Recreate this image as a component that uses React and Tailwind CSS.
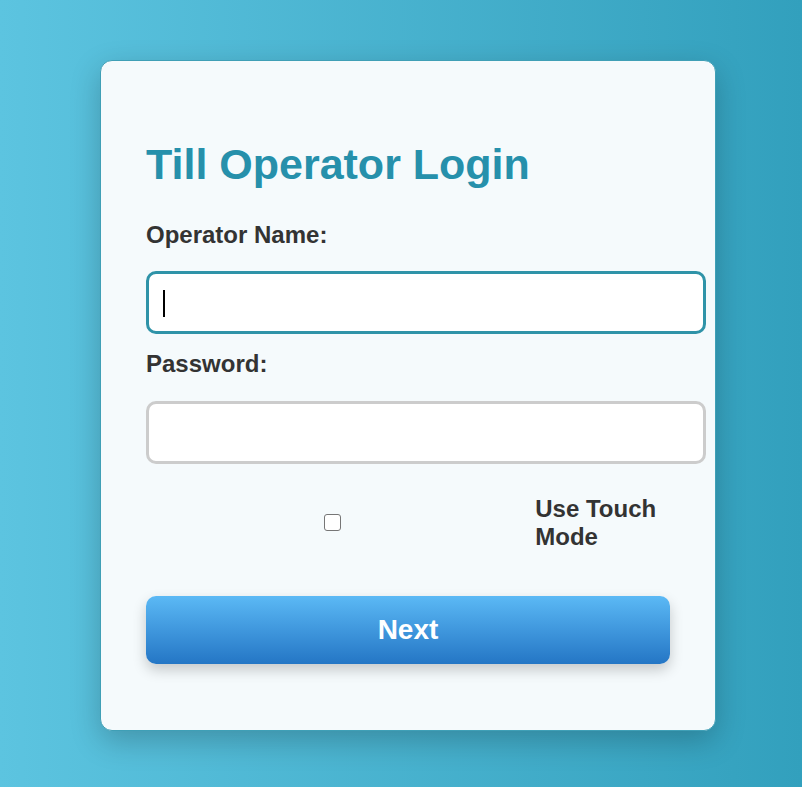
import React, { useState } from 'react';

export default function App() {
  const [name, setName] = useState('');
  const [password, setPassword] = useState('');
  const [touch, setTouch] = useState(false);

  return (
    <div
      className="w-full min-h-[787px] bg-linear-to-r from-[#5cc4e0] to-[#32a0bd] pt-[60px] pl-[100px]"
      style={{ fontFamily: '"Liberation Sans", Arial, sans-serif' }}
    >
      <div className="w-[616px] bg-[#f5fafc] border border-[#3f9fb6] rounded-[12px] px-[45px] pt-[45px] pb-[66px] shadow-[0_10px_30px_rgba(0,0,0,0.22)]">
        {/* Title */}
        <h1 className="mt-[34px] text-[43px] leading-[49px] font-bold text-[#2690ab]">
          Till Operator Login
        </h1>

        {/* Operator name */}
        <label className="block mt-[32px] text-[24px] leading-[28px] font-bold text-[#333]">
          Operator Name:
        </label>
        <div className="relative mt-[22px]">
          <input
            value={name}
            onChange={(e) => setName(e.target.value)}
            className="block w-[560px] h-[63px] px-[15px] text-[20px] bg-white border-[3px] border-[#2f93a8] rounded-[10px] outline-none caret-transparent"
          />
          {/* caret of the focused field */}
          {name === '' && (
            <span className="absolute left-[17px] top-[19px] w-[2px] h-[27px] bg-black pointer-events-none" />
          )}
        </div>

        {/* Password */}
        <label className="block mt-[16px] text-[24px] leading-[28px] font-bold text-[#333]">
          Password:
        </label>
        <input
          type="password"
          value={password}
          onChange={(e) => setPassword(e.target.value)}
          className="block mt-[23px] w-[560px] h-[63px] px-[15px] text-[20px] bg-white border-[3px] border-[#cccccc] rounded-[10px] outline-none"
        />

        {/* Touch mode */}
        <div className="mt-[31px] flex items-center">
          <div className="w-[374px] flex justify-center">
            <input
              type="checkbox"
              checked={touch}
              onChange={(e) => setTouch(e.target.checked)}
              className="m-0 w-[17px] h-[17px] appearance-none bg-white border-[1.5px] border-[#767676] rounded-[3px] checked:bg-[#2476c5]"
            />
          </div>
          <span className="ml-[16px] w-[135px] text-[24px] leading-[27.5px] font-bold text-[#333]">
            Use Touch Mode
          </span>
        </div>

        {/* Submit */}
        <button className="mt-[46px] w-full h-[68px] rounded-[10px] bg-linear-to-b from-[#5bb9f5] to-[#2476c5] text-white text-[28px] font-bold shadow-[0_6px_14px_rgba(0,0,0,0.2)]">
          Next
        </button>
      </div>
    </div>
  );
}
